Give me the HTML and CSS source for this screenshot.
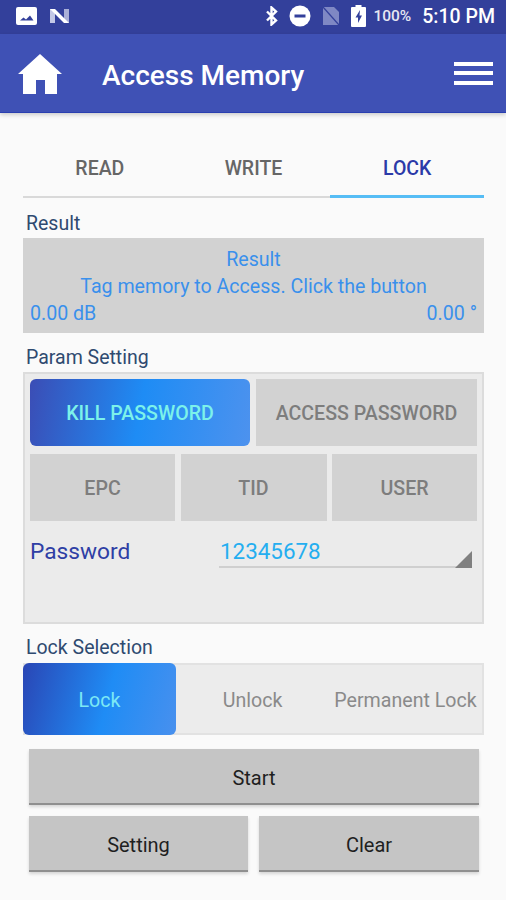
FILE: index.html
```html
<!DOCTYPE html>
<html lang="en">
<head>
<meta charset="utf-8">
<title>Access Memory</title>
<link rel="stylesheet" href="styles.css">
</head>
<body>
<div class="status">
  <div class="status-left">
    <svg class="ic-img" viewBox="0 0 21 20"><rect x="0" y="1" width="21" height="18" rx="2" fill="#fff"/><path d="M4 14.500l3.500-3 2.500 2 4-4 3.500 5z" fill="#33409b"/></svg>
    <svg class="ic-n" viewBox="0 0 21 18"><path d="M1 2h5v14H1z" fill="#c3c8e6"/><path d="M15 2h5v14h-5z" fill="#aab0d8"/><path d="M1 2h5l14 14h-5z" fill="#fff"/></svg>
  </div>
  <div class="status-right">
    <svg class="ic-bt" viewBox="0 0 14 20"><path d="M2 5.500l9 9-4.500 4V1.500l4.500 4-9 9" fill="none" stroke="#fff" stroke-width="2.400"/></svg>
    <svg class="ic-dnd" viewBox="0 0 22 22"><circle cx="11" cy="11" r="10.500" fill="#fff"/><rect x="5.500" y="9.500" width="11" height="3" fill="#33409b"/></svg>
    <svg class="ic-sim" viewBox="0 0 18 20"><path d="M1 1h11l5 5v13H1z" fill="#7f88c4"/><path d="M1 1l16 18" stroke="#33409b" stroke-width="1.200"/></svg>
    <svg class="ic-bat" viewBox="0 0 15 22"><path d="M4.500 0h6v2H14a1 1 0 0 1 1 1v18a1 1 0 0 1-1 1H1a1 1 0 0 1-1-1V3a1 1 0 0 1 1-1h3.500z" fill="#fff"/><path d="M9 5l-4.500 7.500H7V18l4-7.500H8.500z" fill="#33409b"/></svg>
    <span class="pct">100%</span>
    <span class="clock">5:10 PM</span>
  </div>
</div>
<header class="appbar">
  <svg class="ic-home" viewBox="0 0 44 40"><path d="M22 0L0 20h5v20h13V26h9v14h12V20h5z" fill="#fff"/></svg>
  <h1 class="title">Access Memory</h1>
  <div class="menu"><span></span><span></span><span></span></div>
</header>
<main class="content">
  <nav class="tabs">
    <div class="tab">READ</div>
    <div class="tab">WRITE</div>
    <div class="tab tab-active">LOCK</div>
  </nav>
  <div class="label label-result">Result</div>
  <section class="result">
    <div class="result-line">Result</div>
    <div class="result-line">Tag memory to Access. Click the button</div>
    <div class="result-vals"><span>0.00 dB</span><span>0.00 °</span></div>
  </section>
  <div class="label label-param">Param Setting</div>
  <section class="param">
    <div class="row-two">
      <div class="cell cell-on">KILL PASSWORD</div>
      <div class="cell">ACCESS PASSWORD</div>
    </div>
    <div class="row-three">
      <div class="cell">EPC</div>
      <div class="cell">TID</div>
      <div class="cell">USER</div>
    </div>
    <div class="pw">
      <span class="pw-label">Password</span>
      <div class="pw-field"><span>12345678</span><i class="corner"></i></div>
    </div>
  </section>
  <div class="label label-lock">Lock Selection</div>
  <section class="lock">
    <div class="lock-item lock-on">Lock</div>
    <div class="lock-item">Unlock</div>
    <div class="lock-item">Permanent Lock</div>
  </section>
  <div class="actions">
    <button class="btn">Start</button>
    <div class="actions-row">
      <button class="btn">Setting</button>
      <button class="btn">Clear</button>
    </div>
  </div>
</main>
</body>
</html>
```
FILE: styles.css
```css
* { box-sizing: border-box; }
html, body { margin: 0; padding: 0; }
body {
  width: 506px;
  height: 900px;
  overflow: hidden;
  background: #fafafa;
  font-family: Roboto, "Liberation Sans", sans-serif;
}
.status {
  height: 34px;
  background: #33409b;
  display: flex;
  justify-content: space-between;
  align-items: center;
  padding: 0 11px 2px 16px;
  color: #fff;
}
.status-left, .status-right { display: flex; align-items: center; }
.ic-img { width: 21px; height: 20px; }
.ic-n { width: 21px; height: 18px; margin-left: 12px; }
.ic-bt { width: 14px; height: 20px; }
.ic-dnd { width: 22px; height: 22px; margin-left: 10px; }
.ic-sim { width: 18px; height: 20px; margin-left: 11px; }
.ic-bat { width: 15px; height: 22px; margin-left: 11px; }
.pct { font-size: 15.500px; font-weight: 500; margin-left: 7px; opacity: .88; }
.clock { font-size: 19.500px; font-weight: 500; margin-left: 11px; }
.appbar {
  height: 79px;
  background: #3f51b5;
  border-bottom: 1px solid #2a3fb0;
  box-shadow: 0 2px 4px rgba(0,0,0,.18);
  display: flex;
  align-items: center;
  padding: 0 13px 0 18px;
  position: relative;
  color: #fff;
}
.ic-home { width: 44px; height: 40px; margin-top: 1px; }
.title { margin: 5px 0 0 40px; font-size: 28px; font-weight: 500; flex: 1; }
.menu { width: 39px; display: flex; flex-direction: column; gap: 5.500px; }
.menu span { display: block; height: 4px; background: #fff; }
.content { padding: 33px 22px 0 23px; }
.tabs { display: flex; height: 52px; border-bottom: 2px solid #d9d9d9; }
.tab {
  flex: 1;
  text-align: center;
  font-size: 19.500px;
  font-weight: 500;
  color: #666;
  padding-top: 11px;
  margin-bottom: -2px;
}
.tab-active { color: #2b3aa8; border-bottom: 3px solid #56bdf5; }
.label { font-size: 19.500px; color: #2f4a70; line-height: 21px; padding: 1px 0 0 3px; }
.label-result { margin-top: 14px; height: 26px; }
.label-param { margin-top: 13px; height: 27px; margin-bottom: -1px; }
.label-lock { margin-top: 13px; height: 26px; padding-top: 0; }
.result {
  height: 95px;
  background: #d2d2d2;
  color: #3a90ec;
  font-size: 19.600px;
  padding: 8px 7px 0;
  text-align: center;
}
.result-line { height: 27px; line-height: 27px; }
.result-vals { display: flex; justify-content: space-between; line-height: 27px; }
.param {
  height: 252px;
  background: #ebebeb;
  border: 2px solid #dcdcdc;
  padding: 5px;
}
.cell {
  background: #d2d2d2;
  color: #7d7d7d;
  font-size: 19.600px;
  font-weight: 500;
  height: 67px;
  padding-top: 2px;
  display: flex;
  align-items: center;
  justify-content: center;
}
.cell-on {
  background: linear-gradient(100deg, #3b4db5 0%, #1e8cf5 50%, #4d92ee 100%);
  color: #7cf2ea;
  border-radius: 6px;
}
.row-two { display: grid; grid-template-columns: 220px 221px; gap: 6px; }
.row-three { display: grid; grid-template-columns: 145px 146px 145px; gap: 5.500px; margin-top: 8px; }
.pw { display: flex; margin-top: 17px; height: 31px; }
.pw-label { width: 189px; font-size: 22.700px; color: #2f3fa5; line-height: 28px; }
.pw-field {
  width: 253px;
  border-bottom: 2px solid #cfcfcf;
  font-size: 22.400px;
  color: #25aef0;
  line-height: 26px;
  padding-left: 1px;
  position: relative;
  height: 30px;
}
.corner {
  position: absolute;
  right: 0;
  bottom: -2px;
  width: 17px;
  height: 17px;
  background: #808080;
  clip-path: polygon(100% 0, 100% 100%, 0 100%);
}
.lock {
  height: 72px;
  background: #ececec;
  border: 2px solid #e2e2e2;
  display: grid;
  grid-template-columns: 151px 1fr 1fr;
  font-size: 19.600px;
  color: #8a8a8a;
}
.lock-item { display: flex; align-items: center; justify-content: center; white-space: nowrap; padding-top: 2px; }
.lock-on {
  margin: -2px 0 -2px -2px;
  background: linear-gradient(105deg, #2a46b5 0%, #1f8cf5 55%, #4890ee 100%);
  color: #7ce8f5;
  border-radius: 6px;
}
.actions { padding: 14px 5px 0 6px; display: flex; flex-direction: column; gap: 11px; }
.actions-row { display: grid; grid-template-columns: 219px 220px; gap: 11px; }
.btn {
  height: 56px;
  border: 0;
  border-bottom: 2px solid #8f8f8f;
  background: #c5c5c5;
  color: #1f1f1f;
  font: 400 20px Roboto, "Liberation Sans", sans-serif;
  padding: 3px 0 0;
  box-shadow: 0 2px 3px rgba(0,0,0,.15);
}
```
